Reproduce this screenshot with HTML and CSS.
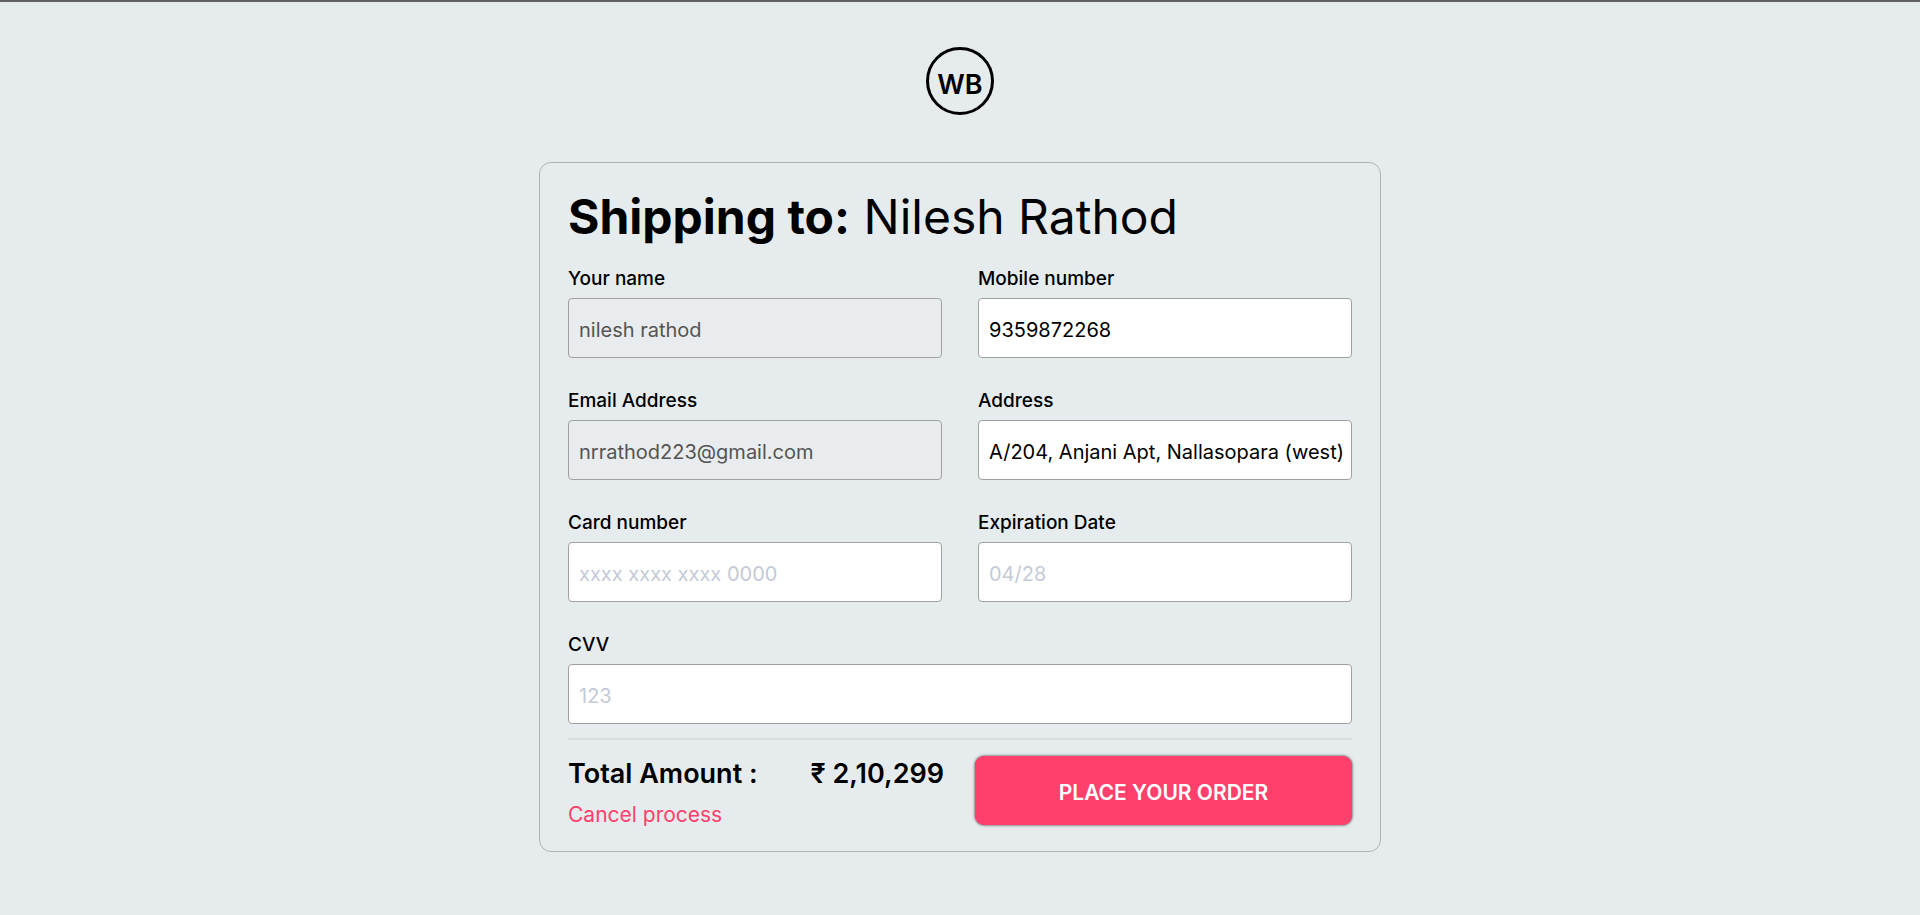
FILE: index.html
```html
<!DOCTYPE html>
<html lang="en">
<head>
<meta charset="utf-8">
<meta name="viewport" content="width=device-width, initial-scale=1">
<title>Checkout</title>
<link rel="stylesheet" href="styles.css">
</head>
<body>
<header class="brand">
  <svg class="logo" viewBox="0 0 68 68" role="img" aria-label="WB">
    <circle cx="34" cy="34" r="32.5" fill="none" stroke="#000" stroke-width="3"/>
    <text class="logo-text" x="34" y="47" text-anchor="middle">WB</text>
  </svg>
</header>
<main class="card">
  <h1 class="title"><strong class="title-lead">Shipping to:</strong> Nilesh Rathod</h1>
  <form class="form">
    <div class="fields">
      <div class="field">
        <label class="label" for="name">Your name</label>
        <input class="input" id="name" type="text" value="nilesh rathod" disabled>
      </div>
      <div class="field">
        <label class="label" for="mobile">Mobile number</label>
        <input class="input" id="mobile" type="text" value="9359872268">
      </div>
      <div class="field">
        <label class="label" for="email">Email Address</label>
        <input class="input" id="email" type="email" value="nrrathod223@gmail.com" disabled>
      </div>
      <div class="field">
        <label class="label" for="address">Address</label>
        <input class="input" id="address" type="text" value="A/204, Anjani Apt, Nallasopara (west)">
      </div>
      <div class="field">
        <label class="label" for="card">Card number</label>
        <input class="input" id="card" type="text" placeholder="xxxx xxxx xxxx 0000">
      </div>
      <div class="field">
        <label class="label" for="expiry">Expiration Date</label>
        <input class="input" id="expiry" type="text" placeholder="04/28">
      </div>
      <div class="field field-wide">
        <label class="label" for="cvv">CVV</label>
        <input class="input" id="cvv" type="text" placeholder="123">
      </div>
    </div>
    <div class="summary">
      <div class="totals">
        <div class="total"><span>Total Amount :</span><span>₹ 2,10,299</span></div>
        <a class="cancel" href="#">Cancel process</a>
      </div>
      <button class="submit" type="submit">PLACE YOUR ORDER</button>
    </div>
  </form>
</main>
</body>
</html>
```
FILE: styles.css
```css
* {
  box-sizing: border-box;
}

body {
  margin: 0;
  min-height: 100vh;
  border-top: 2px solid #616161;
  background: #e6ecee;
  color: #000;
  font-family: Inter, "Noto Sans", sans-serif;
}

.brand {
  display: flex;
  justify-content: center;
  padding: 45px 0 47px;
}

.logo {
  display: block;
  width: 68px;
  height: 68px;
}

.logo-text {
  font-family: Inter, sans-serif;
  font-size: 27px;
  font-weight: 600;
}

.card {
  max-width: 842px;
  margin: 0 auto;
  padding: 22px 28px 22px;
  border: 1px solid #b0b3b5;
  border-radius: 12px;
}

.title {
  margin: 0 0 16px;
  font-size: 48px;
  font-weight: 400;
  line-height: 64px;
}

.title-lead {
  font-weight: 700;
}

.fields {
  display: grid;
  grid-template-columns: 1fr 1fr;
  gap: 29px 36px;
}

.field {
  display: flex;
  flex-direction: column;
  gap: 5px;
  min-width: 0;
}

.field-wide {
  grid-column: 1 / -1;
}

.label {
  font-size: 19px;
  font-weight: 500;
  line-height: 28px;
}

.input {
  width: 100%;
  height: 60px;
  padding: 3px 6px 0 10px;
  border: 1px solid #a0a0a0;
  border-radius: 4px;
  background: #fff;
  color: #000;
  font-family: inherit;
  font-size: 20px;
}

.input:disabled {
  background: #e8ecee;
  color: #545454;
}

.input::placeholder {
  color: #c4cad6;
  opacity: 1;
}

.summary {
  display: grid;
  grid-template-columns: 376px 1fr;
  gap: 31px;
  margin-top: 14px;
  padding-top: 16px;
  border-top: 2px solid #dadcdc;
}

.total {
  display: flex;
  justify-content: space-between;
  font-size: 27px;
  font-weight: 600;
  line-height: 36px;
}

.cancel {
  display: inline-block;
  margin-top: 9px;
  color: #ff3f6c;
  font-size: 21px;
  line-height: 28px;
  text-decoration: none;
}

.submit {
  height: 69px;
  padding: 4px 0 0;
  border: 0;
  border-radius: 9px;
  background: #ff3f6c;
  box-shadow: 0 0 3px #333;
  color: #fff;
  font-family: inherit;
  font-size: 21px;
  font-weight: 600;
}
```
